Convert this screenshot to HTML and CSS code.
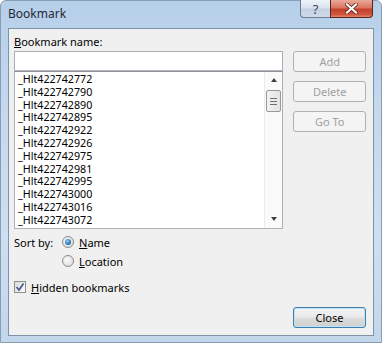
FILE: index.html
```html
<!DOCTYPE html>
<html lang="en">
<head>
  <meta charset="UTF-8">
  <title>Bookmark</title>
  <link rel="stylesheet" href="styles.css">
</head>
<body>

  <div class="window">
    <!-- Title bar -->
    <div class="titlebar">
      <span class="title">Bookmark</span>
      <div class="caption-buttons">
        <div class="cap-btn help">?</div>
        <div class="cap-btn close">
          <svg width="13" height="11" viewBox="0 0 13 11">
            <path d="M2 1.5 L11 9.5 M11 1.5 L2 9.5" stroke="#5a1a10" stroke-width="3.6" stroke-linecap="square"/>
            <path d="M2 1.5 L11 9.5 M11 1.5 L2 9.5" stroke="#fff" stroke-width="2.2" stroke-linecap="square"/>
          </svg>
        </div>
      </div>
    </div>

    <div class="client">
      <div class="main-row">
        <div class="left-col">
          <div class="label"><u>B</u>ookmark name:</div>
          <div class="textbox"></div>
          <div class="listbox">
            <ul id="items" class="items"></ul>
            <div class="scrollbar">
              <div class="arrow up"></div>
              <div class="thumb"><span></span><span></span><span></span></div>
              <div class="track"></div>
              <div class="arrow down"></div>
            </div>
          </div>
        </div>
        <div class="side-col">
          <div class="button disabled">Add</div>
          <div class="button disabled">Delete</div>
          <div class="button disabled">Go To</div>
        </div>
      </div>

      <!-- Sort by -->
      <div class="sort-row">
        <span class="sort-label">Sort by:</span>
        <span class="radio checked"></span>
        <span class="option"><u>N</u>ame</span>
      </div>
      <div class="sort-row indent">
        <span class="radio"></span>
        <span class="option"><u>L</u>ocation</span>
      </div>

      <div class="check-row">
        <span class="checkbox">
          <svg width="10" height="10" viewBox="0 0 10 10">
            <path d="M1.5 5 L4 8 L8.5 1.5" fill="none" stroke="#4a5c94" stroke-width="1.8"/>
          </svg>
        </span>
        <span class="option"><u>H</u>idden bookmarks</span>
      </div>

      <div class="footer">
        <div class="button default">Close</div>
      </div>
    </div>
  </div>

  <script>
    document.addEventListener("DOMContentLoaded", function() {
      const names = [
        "422742772", "422742790", "422742890", "422742895",
        "422742922", "422742926", "422742975", "422742981",
        "422742995", "422743000", "422743016", "422743072"
      ];
      const list = document.getElementById("items");
      list.innerHTML = names.map(n => `<li>_Hlt${n}</li>`).join("");
    });
  </script>

</body>
</html>
```

FILE: styles.css
```css
body {
  margin: 0;
  padding: 0;
  font-family: "Noto Sans", "Open Sans", sans-serif;
  font-size: 11px;
  color: #000;
  background: #fff;
}
.window {
  width: 382px;
  height: 343px;
  box-sizing: border-box;
  padding: 0 7px 6px 7px;
  border: 1px solid #8a9cb2;
  border-radius: 6px 6px 0 0;
  background: linear-gradient(to bottom, #b6cfe9 0%, #c4d8ee 30%, #cddff2 70%, #c2d6ec 100%);
  display: flex;
  flex-direction: column;
}
.titlebar {
  height: 27px;
  display: flex;
  justify-content: space-between;
  align-items: flex-start;
}
.title {
  font-size: 12px;
  line-height: 26px;
  color: #1e2a38;
}
.caption-buttons {
  display: flex;
  margin-top: -1px;
  margin-right: 1px;
}
.cap-btn {
  height: 18px;
  box-sizing: border-box;
  border: 1px solid #6c7c91;
  border-top: none;
  display: flex;
  align-items: center;
  justify-content: center;
}
.help {
  width: 30px;
  border-right: none;
  border-radius: 0 0 0 4px;
  background: linear-gradient(to bottom, #eef3fa 0%, #d9e3ef 45%, #c3d1e2 55%, #cfdbea 100%);
  color: #3a4656;
  font-size: 13px;
}
.close {
  width: 43px;
  border-color: #5e231a;
  border-radius: 0 0 4px 0;
  background: linear-gradient(to bottom, #e9a99a 0%, #d9765f 45%, #c2412b 55%, #d0553c 85%, #e08a70 100%);
}
.client {
  flex: 1;
  background: #f0f0f0;
  border: 1px solid #8092a8;
  padding: 5px 7px 0 5px;
}
.main-row {
  display: flex;
  gap: 10px;
}
.left-col {
  width: 271px;
}
.label {
  line-height: 15px;
  height: 15px;
  margin-bottom: 2px;
}
.textbox {
  height: 20px;
  box-sizing: border-box;
  background: #fff;
  border: 1px solid #abadb3;
  border-bottom-color: #b5b8bf;
}
.listbox {
  height: 158px;
  box-sizing: border-box;
  background: #fff;
  border: 1px solid #aeb0b6;
  border-top-color: #8e9096;
  display: flex;
}
.items {
  flex: 1;
  list-style: none;
  margin: 0;
  padding: 1px 0 0 3px;
  overflow: hidden;
}
.items li {
  height: 12.8px;
  line-height: 13px;
  font-size: 10.7px;
}
.scrollbar {
  width: 17px;
  display: flex;
  flex-direction: column;
  align-items: center;
  background: #fafafa;
  border-left: 1px solid #ececec;
}
.arrow {
  width: 0;
  height: 0;
  border-left: 3px solid transparent;
  border-right: 3px solid transparent;
}
.arrow.up {
  margin-top: 6px;
  border-bottom: 4px solid #404040;
}
.arrow.down {
  margin-bottom: 7px;
  border-top: 4px solid #404040;
}
.thumb {
  margin-top: 8px;
  width: 15px;
  height: 22px;
  box-sizing: border-box;
  border: 1px solid #999;
  border-radius: 2px;
  background: linear-gradient(to right, #f3f3f3, #e3e3e3);
  display: flex;
  flex-direction: column;
  align-items: center;
  justify-content: center;
  gap: 2px;
}
.thumb span {
  width: 7px;
  height: 1px;
  background: #6f6f6f;
}
.track {
  flex: 1;
}
.side-col {
  width: 73px;
  padding-top: 17px;
  display: flex;
  flex-direction: column;
  gap: 9px;
}
.button {
  height: 21px;
  box-sizing: border-box;
  border-radius: 3px;
  text-align: center;
  line-height: 19px;
  font-size: 11px;
}
.button.disabled {
  border: 1px solid #adb2b5;
  background: #f4f4f4;
  color: #a0a0a0;
}
.button.default {
  width: 73px;
  border: 1px solid #3c7fb1;
  background: linear-gradient(to bottom, #f2f2f2 0%, #ebebeb 48%, #dddddd 52%, #cfcfcf 100%);
  box-shadow: inset 0 0 0 1px #bfe3f7;
  color: #000;
}
.sort-row {
  display: flex;
  align-items: center;
  height: 16px;
  margin-top: 5px;
}
.sort-row.indent {
  margin-top: 3px;
  padding-left: 48px;
}
.sort-label {
  width: 48px;
}
.radio {
  width: 12px;
  height: 12px;
  box-sizing: border-box;
  border-radius: 50%;
  border: 1px solid #8c8c8c;
  background: radial-gradient(circle at 40% 40%, #fafafa, #d6d6d6);
  display: flex;
  align-items: center;
  justify-content: center;
}
.radio.checked::after {
  content: "";
  width: 6px;
  height: 6px;
  border-radius: 50%;
  background: radial-gradient(circle at 40% 35%, #8fd3f5, #1d5fa8 70%, #0d3b73);
}
.option {
  margin-left: 5px;
}
.check-row {
  display: flex;
  align-items: center;
  height: 16px;
  margin-top: 10px;
}
.checkbox {
  width: 12px;
  height: 12px;
  box-sizing: border-box;
  border: 1px solid #8e8f8f;
  background: linear-gradient(135deg, #dcdcdc, #fbfbfb);
  display: flex;
  align-items: center;
  justify-content: center;
}
.footer {
  display: flex;
  justify-content: flex-end;
  margin-top: 12px;
}
```
